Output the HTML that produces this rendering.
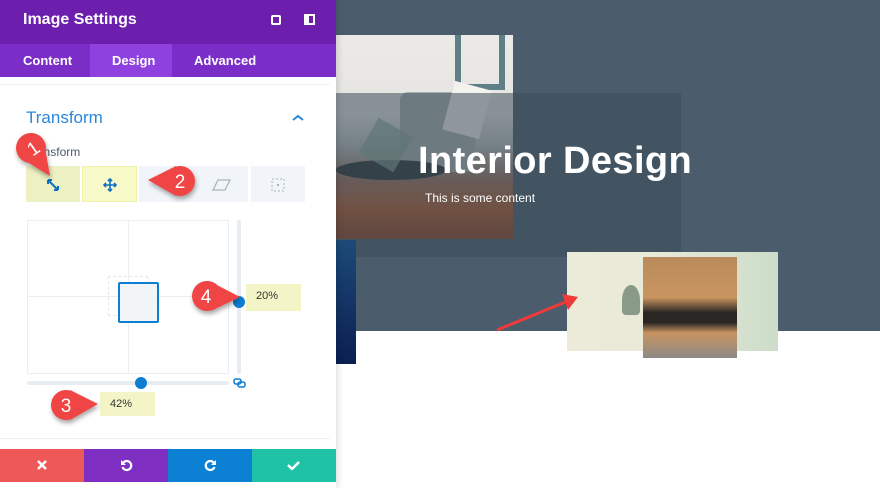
<!DOCTYPE html>
<html><head><style>
*{margin:0;padding:0;box-sizing:border-box}
body{width:880px;height:488px;overflow:hidden;position:relative;background:#fff;font-family:"Liberation Sans",sans-serif}
.a{position:absolute}
</style></head><body>
<!-- right scene -->
<div class="a" style="left:336px;top:0;width:544px;height:331px;background:#4b5d6c"></div>
<div class="a" style="left:336px;top:35px;width:177px;height:204px;background:linear-gradient(180deg,#eceae6 0%,#e4e4e2 40%,#b8bcbc 55%,#9a7060 70%,#b0582a 85%,#8a4020 100%)"></div>
<div class="a" style="left:455px;top:35px;width:50px;height:55px;border:6px solid #5e7f86;border-top:none"></div>
<div class="a" style="left:400px;top:92px;width:75px;height:80px;background:#a9b1ae;border-radius:8px"></div>
<div class="a" style="left:448px;top:85px;width:38px;height:50px;background:#f4f2ef;transform:rotate(15deg)"></div>
<div class="a" style="left:336px;top:160px;width:110px;height:20px;background:#2e3436;border-radius:50%"></div>
<div class="a" style="left:366px;top:125px;width:40px;height:40px;background:#8aa99a;opacity:.7;transform:rotate(30deg)"></div>
<div class="a" style="left:336px;top:93px;width:345px;height:164px;background:rgba(60,76,90,.55)"></div>
<div class="a" style="left:418px;top:140px;color:#fff;font-size:38px;font-weight:bold;letter-spacing:0.4px">Interior Design</div>
<div class="a" style="left:425px;top:191px;color:#fff;font-size:12px">This is some content</div>
<div class="a" style="left:330px;top:228px;width:6px;height:167px;background:#4b5a68"></div>
<div class="a" style="left:336px;top:240px;width:20px;height:124px;background:linear-gradient(180deg,#1c4a78,#0b1f52)"></div>
<div class="a" style="left:567px;top:252px;width:211px;height:99px;background:linear-gradient(90deg,#ecebd9,#e9ead8 40%,#cddcca)"></div>
<div class="a" style="left:622px;top:285px;width:18px;height:30px;background:#8a9a88;border-radius:50% 50% 4px 4px"></div>
<div class="a" style="left:643px;top:257px;width:94px;height:101px;background:linear-gradient(180deg,#b98a5c 0%,#c8955e 40%,#2a2624 55%,#2a2624 65%,#c89360 75%,#8d8a86 100%)"></div>
<svg class="a" style="left:490px;top:290px" width="95" height="45"><line x1="7" y1="40" x2="78" y2="11" stroke="#ef3a3a" stroke-width="3"/><polygon points="88,7 72,4 78,20" fill="#ef3a3a"/></svg>

<!-- panel -->
<div class="a" style="left:0;top:0;width:336px;height:488px;background:#fff;box-shadow:0 0 8px rgba(0,0,0,.2)"></div>
<div class="a" style="left:0;top:0;width:336px;height:44px;background:#6c1fad"></div>
<div class="a" style="left:23px;top:11px;color:#fff;font-size:16px;font-weight:bold">Image Settings</div>
<div class="a" style="left:271px;top:15px;width:10px;height:10px;border:2px solid #fff;border-radius:2px"></div>
<div class="a" style="left:304px;top:14px;width:11px;height:11px;border:2px solid #fff;border-left-width:5px"></div>
<div class="a" style="left:0;top:44px;width:336px;height:33px;background:#7b2ec7"></div>
<div class="a" style="left:90px;top:44px;width:82px;height:33px;background:#8f41e0"></div>
<div class="a" style="left:23px;top:53px;color:#fff;font-size:13px;font-weight:bold">Content</div>
<div class="a" style="left:112px;top:53px;color:#fff;font-size:13px;font-weight:bold">Design</div>
<div class="a" style="left:194px;top:53px;color:#fff;font-size:13px;font-weight:bold">Advanced</div>
<div class="a" style="left:0;top:84px;width:330px;height:1px;background:#eef2f6"></div>
<div class="a" style="left:26px;top:108px;color:#2b87da;font-size:17px">Transform</div>
<svg class="a" style="left:292px;top:114px" width="12" height="8"><path d="M1 6L6 2L11 6" stroke="#2b87da" stroke-width="2" fill="none"/></svg>
<div class="a" style="left:26px;top:145px;color:#4c5866;font-size:12px">Transform</div>
<div class="a" style="left:26px;top:166px;width:54px;height:36px;background:#edf0c2"></div>
<div class="a" style="left:82px;top:166px;width:55px;height:36px;background:#f8f9c9;border:1px solid #f0f2a8"></div>
<div class="a" style="left:139px;top:166px;width:109px;height:36px;background:#f1f5f9"></div>
<div class="a" style="left:251px;top:166px;width:54px;height:36px;background:#f1f5f9"></div>
<svg class="a" style="left:45px;top:177px" width="16" height="16"><path d="M3 3L13 13M3 3v4M3 3h4M13 13v-4M13 13h-4" stroke="#0c71c3" stroke-width="2" fill="none"/></svg>
<svg class="a" style="left:103px;top:178px" width="14" height="14"><path d="M7 1v12M1 7h12M5 3l2-2 2 2M5 11l2 2 2-2M3 5L1 7l2 2M11 5l2 2-2 2" stroke="#0c71c3" stroke-width="1.6" fill="none"/></svg>
<svg class="a" style="left:212px;top:178px" width="20" height="14"><path d="M6 2h12l-5 10H1z" stroke="#aab4bf" stroke-width="1.3" fill="none"/></svg>
<svg class="a" style="left:269px;top:176px" width="18" height="18"><rect x="3" y="3" width="12" height="12" stroke="#aab4bf" stroke-dasharray="2 2" fill="none"/><rect x="8" y="8" width="2" height="2" fill="#aab4bf"/></svg>
<!-- grid -->
<div class="a" style="left:27px;top:220px;width:202px;height:154px;border:1px solid #e9eef3"></div>
<div class="a" style="left:128px;top:220px;width:1px;height:154px;background:#e9eef3"></div>
<div class="a" style="left:27px;top:296px;width:202px;height:1px;background:#e9eef3"></div>
<div class="a" style="left:108px;top:276px;width:40px;height:40px;border:1px dashed #e3e8ee"></div>
<div class="a" style="left:118px;top:282px;width:41px;height:41px;border:2px solid #0c7fd3;background:#f2f5f8;border-radius:2px"></div>
<div class="a" style="left:237px;top:220px;width:4px;height:154px;background:#e6ecf2;border-radius:2px"></div>
<div class="a" style="left:233px;top:296px;width:12px;height:12px;border-radius:50%;background:#0c7fd3"></div>
<div class="a" style="left:246px;top:284px;width:55px;height:27px;background:#f3f5c6;font-size:11px;color:#333;padding:6px 0 0 10px">20%</div>
<div class="a" style="left:27px;top:381px;width:202px;height:4px;background:#e6ecf2;border-radius:2px"></div>
<div class="a" style="left:135px;top:377px;width:12px;height:12px;border-radius:50%;background:#0c7fd3"></div>
<svg class="a" style="left:233px;top:378px" width="14" height="10"><rect x="1" y="1" width="7" height="5" rx="2" stroke="#0c7fd3" stroke-width="1.5" fill="none"/><rect x="5" y="4" width="7" height="5" rx="2" stroke="#0c7fd3" stroke-width="1.5" fill="none"/></svg>
<div class="a" style="left:100px;top:392px;width:55px;height:24px;background:#f3f5c6;font-size:11px;color:#333;padding:6px 0 0 10px">42%</div>
<div class="a" style="left:0;top:438px;width:330px;height:1px;background:#eef2f6"></div>
<div class="a" style="left:0;top:449px;width:84px;height:33px;background:#ef5858"></div>
<div class="a" style="left:84px;top:449px;width:84px;height:33px;background:#7e2fc2"></div>
<div class="a" style="left:168px;top:449px;width:84px;height:33px;background:#0c80d3"></div>
<div class="a" style="left:252px;top:449px;width:84px;height:33px;background:#20c2a6"></div>
<svg class="a" style="left:37px;top:460px" width="10" height="10"><path d="M1 1L9 9M9 1L1 9" stroke="#fff" stroke-width="2.5"/></svg>
<svg class="a" style="left:120px;top:459px" width="13" height="13"><path d="M3 4A4.5 4.5 0 1 1 2.5 8" stroke="#fff" stroke-width="2.2" fill="none"/><path d="M1 1v5h5z" fill="#fff"/></svg>
<svg class="a" style="left:204px;top:459px" width="13" height="13"><path d="M10 4A4.5 4.5 0 1 0 10.5 8" stroke="#fff" stroke-width="2.2" fill="none"/><path d="M12 1v5h-5z" fill="#fff"/></svg>
<svg class="a" style="left:287px;top:460px" width="13" height="10"><path d="M1 5l4 4 7-7" stroke="#fff" stroke-width="2.5" fill="none"/></svg>
<!-- callouts -->
<svg class="a" style="left:0;top:0" width="340" height="488">
<defs><filter id="s"><feDropShadow dx="1" dy="3" stdDeviation="2.5" flood-opacity=".35"/></filter></defs>
<g filter="url(#s)" fill="#f04444">
<g><circle cx="31" cy="148" r="15"/><polygon points="50,176 24,160 44,142"/></g>
<g><circle cx="180" cy="181" r="15"/><polygon points="148,180 176,166 176,196"/></g>
<g><circle cx="66" cy="405" r="15"/><polygon points="98,404 70,390 70,420"/></g>
<g><circle cx="207" cy="296" r="15"/><polygon points="240,297 211,282 211,311"/></g>
</g>
<g fill="#fff" font-family="Liberation Sans" font-size="19" text-anchor="middle">
<text x="33" y="155" transform="rotate(-35 33 148)">1</text>
<text x="180" y="188">2</text>
<text x="66" y="412">3</text>
<text x="206" y="303">4</text>
</g></svg>
</body></html>
